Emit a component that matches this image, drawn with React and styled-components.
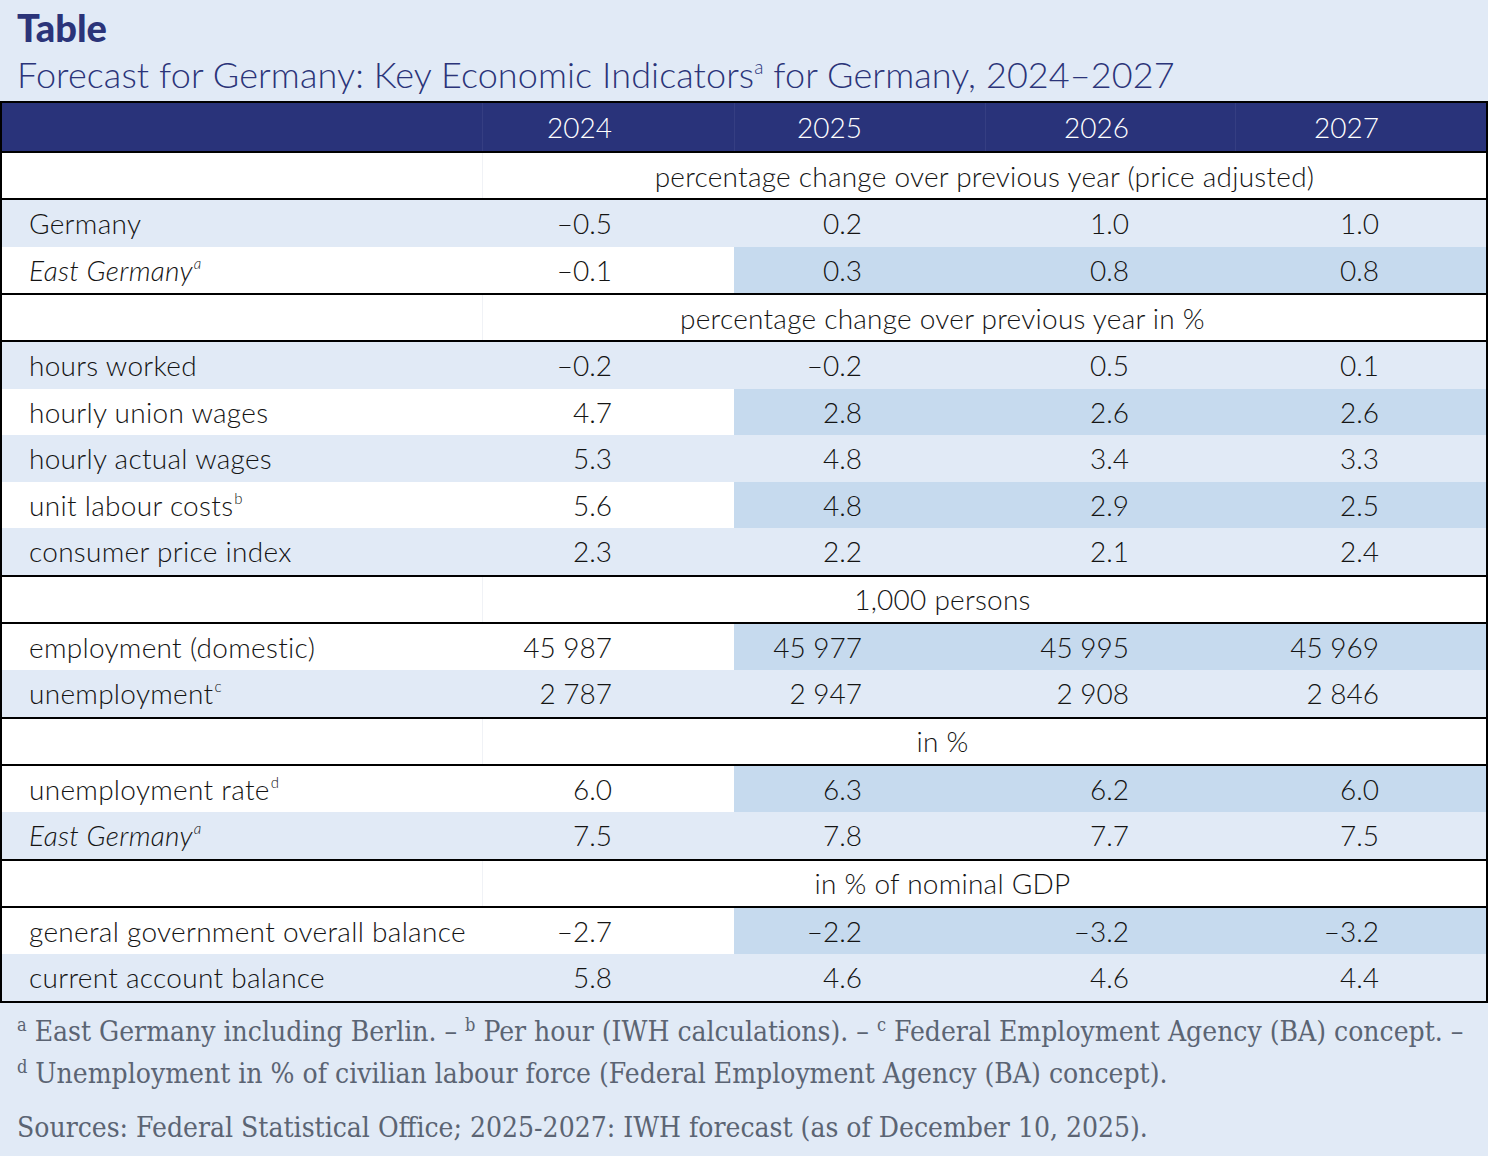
import React from 'react';
import styled, { createGlobalStyle } from 'styled-components';

const GlobalStyle = createGlobalStyle`
  html, body {
    margin: 0;
    padding: 0;
    background: #e1eaf6;
  }
`;

const NAVY = '#29337a';
const LIGHT = '#e1eaf6';
const DARK = '#c6daee';

// column widths inside the 2px side borders, and right padding per value column
const COLS = '480px 252px 251px 250px 251px';
const PADS = [122, 123, 106, 107];

const Page = styled.div`
  width: 1488px;
  height: 1156px;
  background: ${LIGHT};
  display: flex;
  flex-direction: column;
  font-family: 'Lato', 'Noto Sans', sans-serif;
  color: #141414;
`;

const Heading = styled.header`
  height: 101px;
  padding: 0 17px;
  color: #2b3479;
  box-sizing: border-box;
`;

const Title = styled.h1`
  margin: 0;
  padding-top: 5px;
  font-size: 38px;
  line-height: 44px;
  font-weight: 900;
`;

const Subtitle = styled.h2`
  margin: 0;
  font-size: 36px;
  line-height: 50px;
  font-weight: 300;
  letter-spacing: 0.1px;

  sup {
    font-size: 19px;
    vertical-align: 14px;
    line-height: 0;
  }
`;

const Table = styled.div`
  border: 2px solid #000;
  display: flex;
  flex-direction: column;
`;

const HeadRow = styled.div`
  display: grid;
  grid-template-columns: ${COLS};
  height: 48px;
  background: ${NAVY};
  color: #fff;
  font-size: 28px;
  font-weight: 300;
`;

const HeadCell = styled.div`
  display: flex;
  align-items: center;
  justify-content: flex-end;
  padding-right: ${(p) => p.$pad}px;
  border-left: 1px solid #353e82;
`;

const SectionRow = styled.div`
  display: grid;
  grid-template-columns: 480px 1fr;
  height: 45px;
  background: #fff;
  border-top: 2px solid #000;
  border-bottom: 2px solid #000;
  font-size: 28px;
  font-weight: 300;
  letter-spacing: 0.25px;
`;

const SectionText = styled.div`
  display: flex;
  align-items: center;
  justify-content: center;
  padding-right: ${(p) => p.$shift}px;
  border-left: 1px solid #f0f2f6;
`;

const DataRow = styled.div`
  display: grid;
  grid-template-columns: ${COLS};
  height: 46.5px;
  background: ${(p) => (p.$striped ? LIGHT : '#fff')};
  font-size: 28px;
  font-weight: 300;
`;

const Label = styled.div`
  display: flex;
  align-items: center;
  padding-left: 27px;
  letter-spacing: 0.3px;
  font-style: ${(p) => (p.$italic ? 'italic' : 'normal')};

  sup {
    align-self: flex-start;
    margin-top: 9px;
    font-size: 15px;
    font-weight: 300;
    line-height: 1;
    margin-left: 1px;
  }
`;

const Value = styled.div`
  display: flex;
  align-items: center;
  justify-content: flex-end;
  padding-right: ${(p) => p.$pad}px;
  background: ${(p) => (p.$tinted ? DARK : 'transparent')};
`;

const Notes = styled.footer`
  padding: 8px 17px 0;
  font-family: 'DejaVu Serif Condensed', 'Liberation Serif', serif;
  font-size: 28px;
  line-height: 42px;
  color: #5b6473;

  p {
    margin: 0;
  }

  p + p {
    margin-top: 12px;
  }

  sup {
    font-size: 18px;
    vertical-align: 10px;
    line-height: 0;
  }
`;

const groups = [
  {
    unit: 'percentage change over previous year (price adjusted)',
    shift: 0,
    rows: [
      { label: 'Germany', values: ['–0.5', '0.2', '1.0', '1.0'] },
      { label: 'East Germany', sup: 'a', italic: true, values: ['–0.1', '0.3', '0.8', '0.8'] },
    ],
  },
  {
    unit: 'percentage change over previous year in %',
    shift: 84,
    rows: [
      { label: 'hours worked', values: ['–0.2', '–0.2', '0.5', '0.1'] },
      { label: 'hourly union wages', values: ['4.7', '2.8', '2.6', '2.6'] },
      { label: 'hourly actual wages', values: ['5.3', '4.8', '3.4', '3.3'] },
      { label: 'unit labour costs', sup: 'b', values: ['5.6', '4.8', '2.9', '2.5'] },
      { label: 'consumer price index', values: ['2.3', '2.2', '2.1', '2.4'] },
    ],
  },
  {
    unit: '1,000 persons',
    shift: 84,
    rows: [
      { label: 'employment (domestic)', values: ['45 987', '45 977', '45 995', '45 969'] },
      { label: 'unemployment', sup: 'c', values: ['2 787', '2 947', '2 908', '2 846'] },
    ],
  },
  {
    unit: 'in %',
    shift: 84,
    rows: [
      { label: 'unemployment rate', sup: 'd', values: ['6.0', '6.3', '6.2', '6.0'] },
      { label: 'East Germany', sup: 'a', italic: true, values: ['7.5', '7.8', '7.7', '7.5'] },
    ],
  },
  {
    unit: 'in % of nominal GDP',
    shift: 84,
    rows: [
      { label: 'general government overall balance', values: ['–2.7', '–2.2', '–3.2', '–3.2'] },
      { label: 'current account balance', values: ['5.8', '4.6', '4.6', '4.4'] },
    ],
  },
];

const years = ['2024', '2025', '2026', '2027'];

export default function App() {
  // stripes run across the whole table, not per section
  let rowIndex = 0;

  return (
    <Page>
      <GlobalStyle />
      <Heading>
        <Title>Table</Title>
        <Subtitle>
          Forecast for Germany: Key Economic Indicators<sup>a</sup> for Germany, 2024–2027
        </Subtitle>
      </Heading>
      <Table>
        <HeadRow>
          <div />
          {years.map((y, i) => (
            <HeadCell key={y} $pad={PADS[i]}>{y}</HeadCell>
          ))}
        </HeadRow>
        {groups.map((g) => (
          <React.Fragment key={g.unit}>
            <SectionRow>
              <div />
              <SectionText $shift={g.shift}>{g.unit}</SectionText>
            </SectionRow>
            {g.rows.map((r) => {
              const striped = rowIndex % 2 === 0;
              rowIndex += 1;
              return (
                <DataRow key={r.label + rowIndex} $striped={striped}>
                  <Label $italic={r.italic}>
                    {r.label}
                    {r.sup && <sup>{r.sup}</sup>}
                  </Label>
                  {r.values.map((v, vi) => (
                    <Value key={vi} $pad={PADS[vi]} $tinted={!striped && vi > 0}>
                      {v}
                    </Value>
                  ))}
                </DataRow>
              );
            })}
          </React.Fragment>
        ))}
      </Table>
      <Notes>
        <p>
          <sup>a</sup> East Germany including Berlin. – <sup>b</sup> Per hour (IWH calculations). –{' '}
          <sup>c</sup> Federal Employment Agency (BA) concept. –<br />
          <sup>d</sup> Unemployment in % of civilian labour force (Federal Employment Agency (BA) concept).
        </p>
        <p>Sources: Federal Statistical Office; 2025-2027: IWH forecast (as of December 10, 2025).</p>
      </Notes>
    </Page>
  );
}
